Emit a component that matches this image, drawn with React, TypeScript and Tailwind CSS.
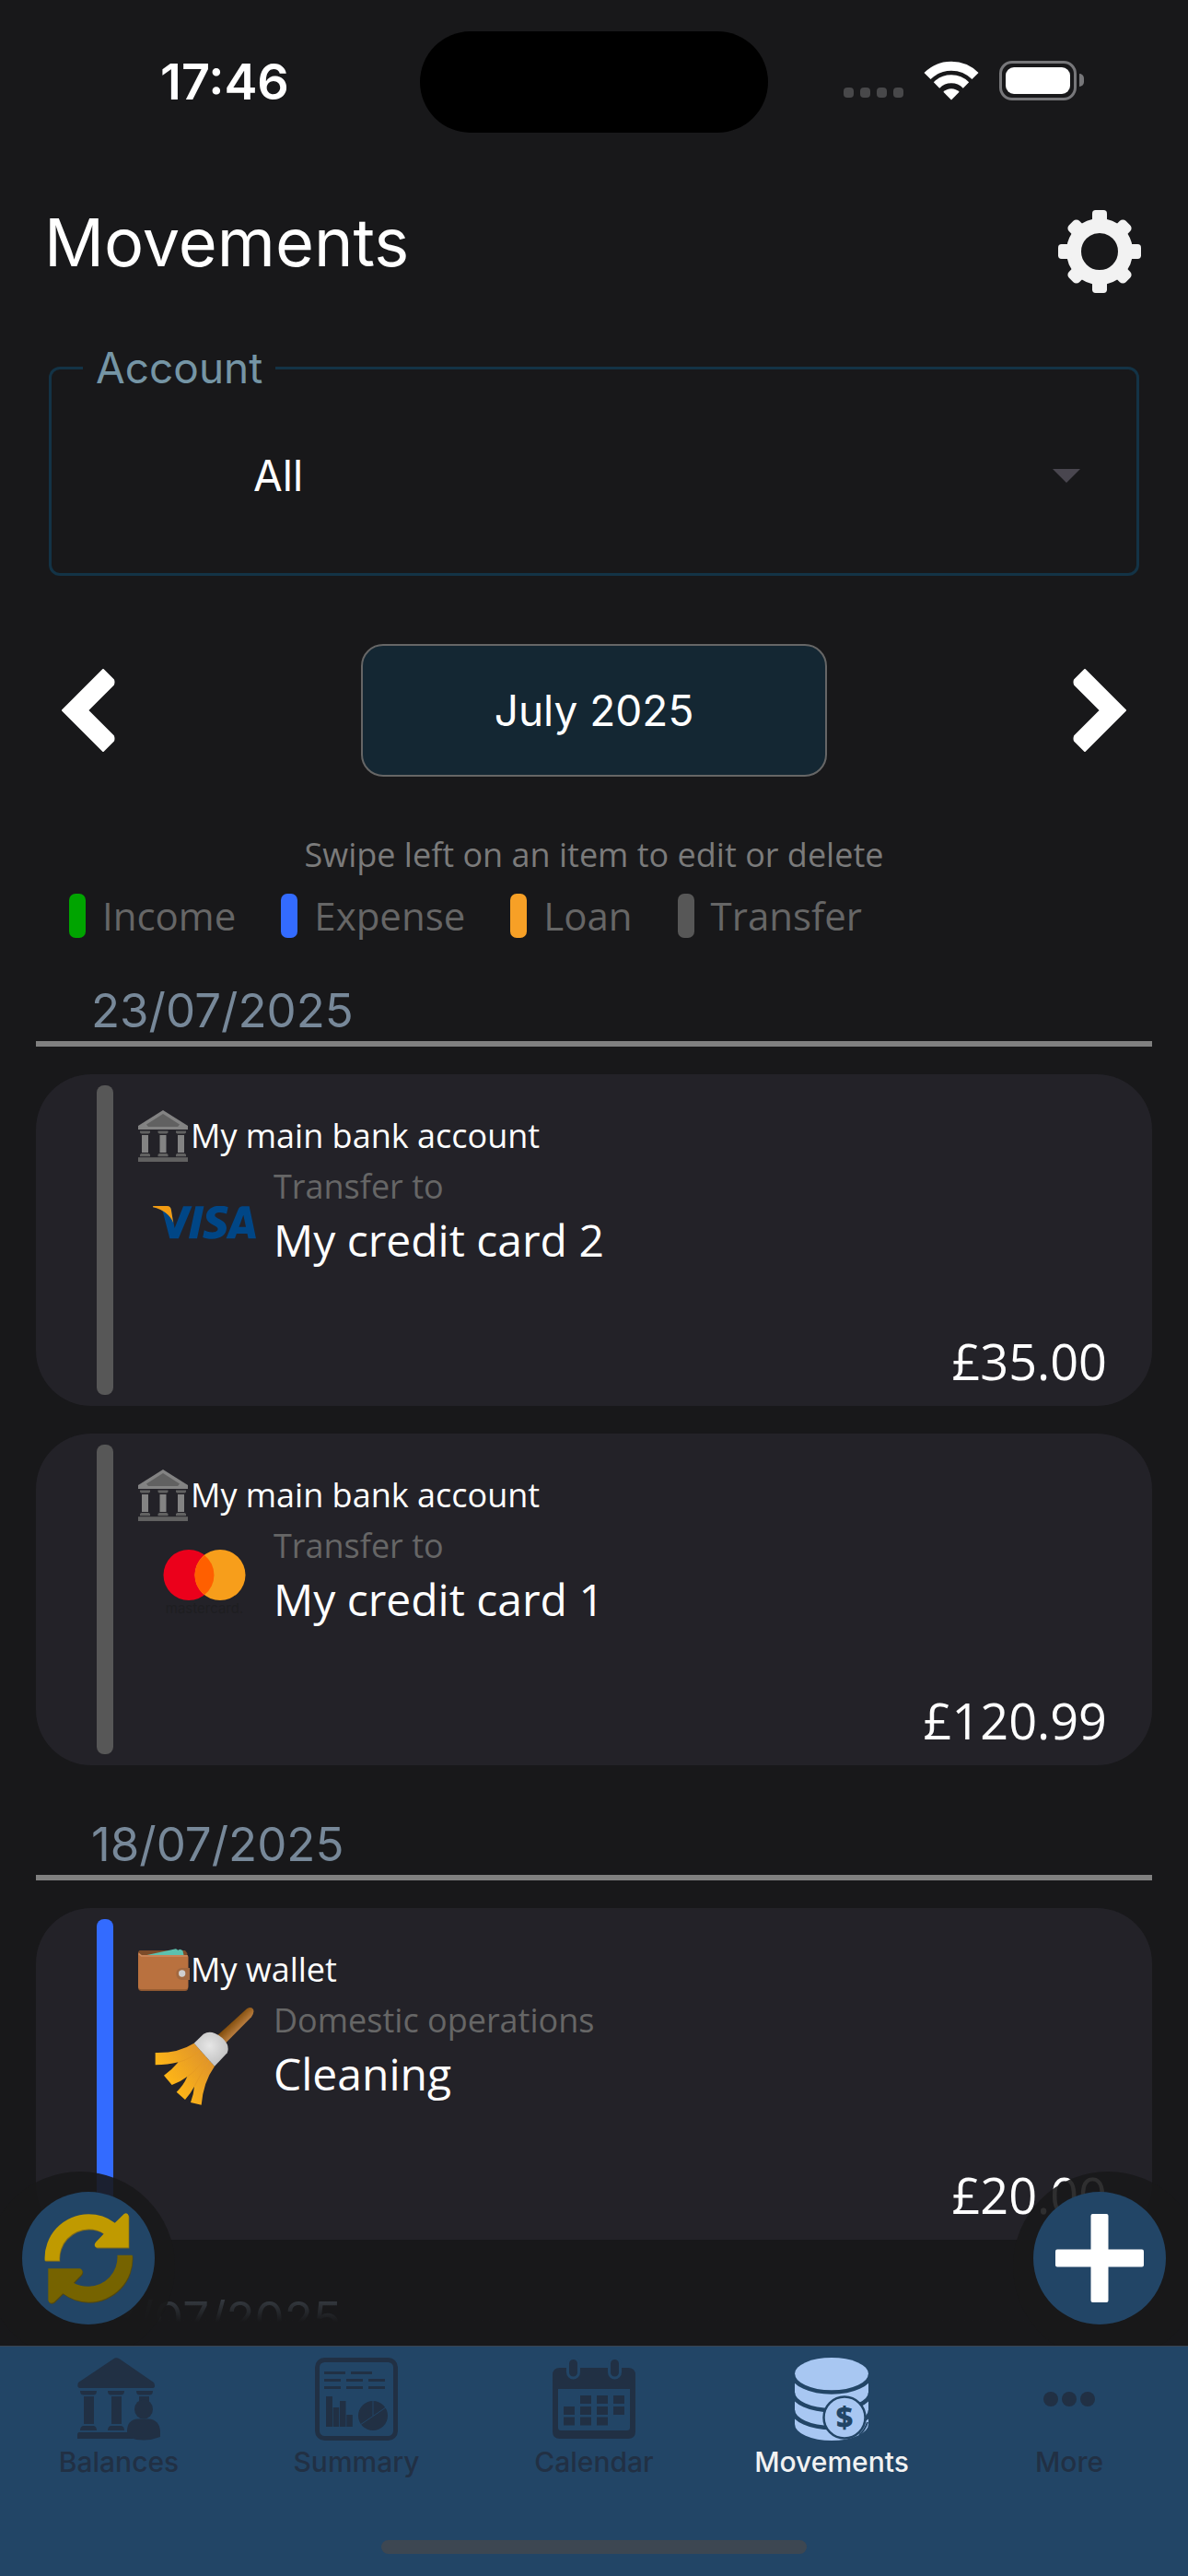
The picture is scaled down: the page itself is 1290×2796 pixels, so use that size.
import type { ReactNode } from "react"
import clsx from "clsx"
import { SiVisa } from "react-icons/si"

type MovementKind = "income" | "expense" | "loan" | "transfer"

interface Movement {
  id: string
  kind: MovementKind
  account: string
  accountIcon: ReactNode
  category: string
  title: string
  icon: ReactNode
  amount: number
}

interface MovementGroup {
  date: string
  movements: Movement[]
}

const kindColors: Record<MovementKind, string> = {
  income: "bg-[#00a400]",
  expense: "bg-[#336bff]",
  loan: "bg-[#f7a026]",
  transfer: "bg-[#575757]",
}

const legend: { kind: MovementKind; label: string }[] = [
  { kind: "income", label: "Income" },
  { kind: "expense", label: "Expense" },
  { kind: "loan", label: "Loan" },
  { kind: "transfer", label: "Transfer" },
]

/* ---------- status bar ---------- */

function WifiIcon() {
  return (
    <svg viewBox="0 0 60 43" className="h-[43px] w-[60px]" fill="none" stroke="white" aria-hidden="true">
      <path d="M4 16.5 A36.8 36.8 0 0 1 56 16.5" strokeWidth="10" />
      <path d="M14 26.5 A22.6 22.6 0 0 1 46 26.5" strokeWidth="9" />
      <path d="M30 42.5 L21.3 33.8 A12.4 12.4 0 0 1 38.7 33.8 Z" fill="white" stroke="none" />
    </svg>
  )
}

function StatusBar() {
  return (
    <div className="grid grid-cols-[1fr_378px_1fr] items-center px-8 pt-[34px]">
      <span className="text-center font-[Inter,sans-serif] text-[54px] leading-[60px] font-semibold">17:46</span>
      <div className="h-[110px] rounded-full bg-black" />
      <div className="mb-1 flex items-center justify-center gap-[22px]">
        <div className="mt-[27px] flex gap-[7px]">
          {[0, 1, 2, 3].map((dot) => (
            <span key={dot} className="size-[11px] rounded-[4px] bg-[#48484a]" />
          ))}
        </div>
        <WifiIcon />
        <div className="flex items-center gap-[3px]">
          <div className="h-[43px] w-[84px] rounded-[14px] border-3 border-[#77777a] p-[4px]">
            <div className="h-full rounded-[9px] bg-white" />
          </div>
          <div className="h-[14px] w-[5px] rounded-r-full bg-[#77777a]" />
        </div>
      </div>
    </div>
  )
}

/* ---------- icons ---------- */

function GearIcon() {
  return (
    <svg viewBox="45 45 270 270" className="size-[90px]" fill="#f2f2f2" aria-hidden="true">
      <circle cx="180" cy="180" r="84" fill="none" stroke="#f2f2f2" strokeWidth="48" />
      {[0, 90, 180, 270].map((angle) => (
        <rect key={angle} x="156" y="45" width="48" height="50" rx="11" transform={`rotate(${angle} 180 180)`} />
      ))}
      {[45, 135, 225, 315].map((angle) => (
        <rect key={angle} x="156" y="49" width="48" height="50" rx="14" transform={`rotate(${angle} 180 180)`} />
      ))}
    </svg>
  )
}

function ChevronIcon({ flipped = false }: { flipped?: boolean }) {
  return (
    <svg viewBox="0 0 59 90" className={clsx("h-[90px] w-[59px]", flipped && "rotate-180")} aria-hidden="true">
      <path
        d="M46 1 L57 12 Q58 14 57 17 L29 45 L57 73 Q58 76 57 78 L46 89 L2 45 Z"
        fill="white"
        stroke="white"
        strokeWidth="2"
        strokeLinejoin="round"
      />
    </svg>
  )
}

function BankIcon() {
  return (
    <svg viewBox="0 0 54 56" className="h-[56px] w-[54px]" aria-hidden="true">
      <path d="M27 0 L54 17 V21 H0 V17 Z" fill="#838383" />
      <path d="M27 4 L45 15.5 L43 18 H11 L9 15.5 Z" fill="#616161" />
      {[2, 21.5, 41].map((x) => (
        <g key={x}>
          <path d={`M${x} 22.5 h11 v2 l-1.5 1 h-8 l-1.5 -1 z`} fill="#616161" />
          <rect x={x + 2} y="27" width="7" height="19" fill="#838383" />
          <path d={`M${x + 1.5} 47 h8 l1.5 1 v2.3 h-11 v-2.3 z`} fill="#616161" />
        </g>
      ))}
      <rect y="51.2" width="54" height="4.8" fill="#616161" />
    </svg>
  )
}

function WalletIcon() {
  return (
    <svg viewBox="27 45 168 138" className="h-[46px] w-[56px]" aria-hidden="true">
      <path d="M27 56 L31 51 H180 L187 60 V90 H27 Z" fill="#7c4b29" />
      <path d="M45 68 L150 46 L157 50 L163 47 L172 51 L176 68 Z" fill="#5cc1ae" />
      <path d="M27 58 L36 66 H186 Q190 67 190 72 V172 Q190 183 180 183 H38 Q27 183 27 172 Z" fill="#8f5831" />
      <path d="M27 58 L36 66 H186 Q190 67 190 72 V168 Q190 178 180 178 H38 Q27 178 27 168 Z" fill="#b9713f" />
      <path d="M29 62 L38 69 H188" fill="none" stroke="#cb8b60" strokeWidth="5" />
      <path d="M195 108 V147 H168 Q151 145 151 127 Q151 110 168 108 Z" fill="#a2683f" />
      <circle cx="170" cy="126" r="11" fill="#cfcfcf" />
    </svg>
  )
}

function BroomIcon() {
  return (
    <svg viewBox="84 234 324 324" className="size-[108px]" aria-hidden="true">
      <defs>
        <linearGradient id="handle" x1="330" y1="290" x2="352" y2="312" gradientUnits="userSpaceOnUse">
          <stop offset="0" stopColor="#85500f" />
          <stop offset="1" stopColor="#b57a3c" />
        </linearGradient>
        <radialGradient id="ferrule" cx="262" cy="362" r="75" gradientUnits="userSpaceOnUse">
          <stop offset="0" stopColor="#e6e6e6" />
          <stop offset="1" stopColor="#bdbdbd" />
        </radialGradient>
        <linearGradient id="bristles" x1="245" y1="390" x2="130" y2="470" gradientUnits="userSpaceOnUse">
          <stop offset="0" stopColor="#e0952a" />
          <stop offset="1" stopColor="#fdb417" />
        </linearGradient>
      </defs>
      <path d="M288 328 L384 241 Q399 232 405 243 Q409 254 399 268 L316 352 Z" fill="url(#handle)" />
      <path
        d="M212 353 Q160 386 86 384 V424 Q126 424 161 415 Q140 440 114 458 L140 489 Q168 479 190 462 Q178 490 155 512 L183 537 Q200 518 213 494 Q211 520 201 546 L236 554 Q242 480 279 428 Z"
        fill="url(#bristles)"
      />
      <path d="M232 376 Q200 405 161 415 M250 395 Q225 440 190 462 M262 408 Q235 450 213 494" fill="none" stroke="#e79b22" strokeWidth="3" />
      <path d="M212 353 L243 323 Q260 313 280 321 Q305 331 320 356 Q326 371 320 385 L279 428 Z" fill="url(#ferrule)" />
    </svg>
  )
}

function VisaLogo() {
  return (
    <svg viewBox="0 8.2 24 7.6" className="w-[112px]" role="img" aria-label="Visa">
      <SiVisa size={24} color="#004686" />
      <path d="M0 8.48 L0.05 8.2 H3.35 Q4.1 8.25 4.24 9.03 L4.75 12.1 C4 10.3 2.4 9 0 8.48 Z" fill="#f39c12" />
    </svg>
  )
}

function MastercardLogo() {
  return (
    <svg viewBox="0 -8 90 86" className="w-[90px]" role="img" aria-label="Mastercard">
      <circle cx="28" cy="27.5" r="27.5" fill="#eb001b" />
      <circle cx="62" cy="27.5" r="27.5" fill="#f79e1b" />
      <path d="M45 5.9 A27.5 27.5 0 0 1 45 49.1 A27.5 27.5 0 0 1 45 5.9 Z" fill="#ff5f00" />
      <text x="45" y="69" textAnchor="middle" fill="#1e1e21" className="font-[Inter,sans-serif] text-[15px]">
        mastercard.
      </text>
    </svg>
  )
}

function RefreshIcon() {
  const upper =
    "M144 310 A143 143 0 0 1 287 158 Q335 158 373 186 L403 157 Q415 151 418 164 V267 H314 Q301 263 311 249 L337 222 Q316 207 287 207 A95 95 0 0 0 192 310 Z"
  const lower =
    "M381 292 H430 A143 143 0 0 1 287 445 Q240 445 203 417 L174 445 Q159 453 155 440 V335 H260 Q272 342 264 355 L238 382 Q258 394 287 394 A95 95 0 0 0 381 292 Z"
  return (
    <svg viewBox="143 154 290 298" className="h-[99px] w-[97px]" aria-hidden="true">
      <path d={upper} fill="#7f6a1c" transform="translate(2 3)" />
      <path d={upper} fill="#c09a00" />
      <path d={lower} fill="#54480f" transform="translate(2 3)" />
      <path d={lower} fill="#766300" />
    </svg>
  )
}

function PlusIcon() {
  return (
    <svg viewBox="0 0 96 96" className="size-[96px]" fill="white" aria-hidden="true">
      <rect x="38.5" width="19" height="96" rx="2" />
      <rect y="38.5" width="96" height="19" rx="2" />
    </svg>
  )
}

function BalancesIcon() {
  return (
    <svg viewBox="0 0 90 90" className="size-[90px]" fill="currentColor" aria-hidden="true">
      <path d="M39 1.5 Q42 -1 46 1.5 L83 27 Q86 33 81 33 H3 Q-1 33 1 27 Z" />
      {[3, 33, 64].map((x) => (
        <path key={x} d={`M${x} 36 h18 q0 4 -3 4.5 h-12 q-3 -0.5 -3 -4.5 z`} />
      ))}
      <rect x="7" y="42" width="11" height="30" />
      <rect x="37" y="42" width="11" height="30" />
      <rect x="67" y="42" width="11" height="12" />
      <path d="M6 74 h12 q3 1 3 5 h-18 q0 -4 3 -5 z" />
      <path d="M36 74 h12 q3 1 3 5 h-18 q0 -4 3 -5 z" />
      <path d="M2 81 H60 V88 H0 V84 Q0 81 2 81 Z" />
      <ellipse cx="72" cy="56" rx="10" ry="10.5" />
      <path d="M54 86 V80 Q54 67 66 66.5 H77 Q89 67 90 80 V86 Q72 93 54 86 Z" />
    </svg>
  )
}

function SummaryIcon() {
  return (
    <svg viewBox="0 0 90 90" className="size-[90px]" fill="currentColor" aria-hidden="true">
      <rect x="2.5" y="2.5" width="85" height="85" rx="8" fill="none" stroke="currentColor" strokeWidth="5" />
      <path d="M10 15h23v3H10zM39 15h23v3H39zM10 23h18v3H10zM34 23h18v3H34zM58 23h18v3H58zM10 31h18v3H10zM34 31h18v3H34zM58 31h18v3H58z" />
      <path d="M12 42h7v33h-7zM19.7 54h6.5v21h-6.5zM27 47h6.5v28H27zM34.3 62h6.5v13h-6.5z" />
      <circle cx="63" cy="63" r="16" />
      <path d="M63 46 V63 M49 73 L77 54" stroke="#224566" strokeWidth="1" />
    </svg>
  )
}

function CalendarIcon() {
  return (
    <svg viewBox="0 0 90 90" className="size-[90px]" fill="currentColor" aria-hidden="true">
      <path
        fillRule="evenodd"
        d="M8 11 H82 Q90 11 90 19 V80 Q90 88 82 88 H8 Q0 88 0 80 V19 Q0 11 8 11 Z M6 34 V76 Q6 79 9 79 H81 Q84 79 84 76 V34 Z"
      />
      <rect x="16.5" y="0.5" width="12" height="21.5" rx="6" stroke="#224566" strokeWidth="3" />
      <rect x="61.5" y="0.5" width="12" height="21.5" rx="6" stroke="#224566" strokeWidth="3" />
      <path d="M30 41h12v9H30zM48 41h12v9H48zM66 41h12v9H66zM12 53h12v9H12zM30 53h12v9H30zM48 53h12v9H48zM66 53h12v9H66zM12 64.5h12v9H12zM30 64.5h12v9H30zM48 64.5h12v9H48z" />
    </svg>
  )
}

function MovementsIcon() {
  return (
    <svg viewBox="0 0 80 90" className="h-[90px] w-[80px]" aria-hidden="true">
      <path d="M0 17.5 A40 17.5 0 0 1 80 17.5 V72 A40 18 0 0 1 0 72 Z" fill="#a8c7f2" />
      <g fill="none" stroke="#224566" strokeWidth="4.5">
        <path d="M-2 18 A42 19.5 0 0 0 82 18" />
        <path d="M-2 38 A42 19 0 0 0 82 38" />
        <path d="M-2 57 A42 19 0 0 0 82 57" />
      </g>
      <circle cx="54" cy="65" r="22.5" fill="#a8c7f2" stroke="#224566" strokeWidth="2.5" />
      <path d="M70 84 Q76 79 79 70" fill="none" stroke="#224566" strokeWidth="2" />
      <text x="54" y="76" textAnchor="middle" fill="#224566" className="font-['Open_Sans',sans-serif] text-[32px] font-extrabold">
        $
      </text>
    </svg>
  )
}

function MoreIcon() {
  return (
    <svg viewBox="0 0 56 90" className="h-[90px] w-[56px]" fill="currentColor" aria-hidden="true">
      <circle cx="8" cy="45" r="8" />
      <circle cx="28" cy="45" r="8" />
      <circle cx="48" cy="45" r="8" />
    </svg>
  )
}

/* ---------- data ---------- */

const groups: MovementGroup[] = [
  {
    date: "23/07/2025",
    movements: [
      {
        id: "m1",
        kind: "transfer",
        account: "My main bank account",
        accountIcon: <BankIcon />,
        category: "Transfer to",
        title: "My credit card 2",
        icon: <VisaLogo />,
        amount: 35,
      },
      {
        id: "m2",
        kind: "transfer",
        account: "My main bank account",
        accountIcon: <BankIcon />,
        category: "Transfer to",
        title: "My credit card 1",
        icon: <MastercardLogo />,
        amount: 120.99,
      },
    ],
  },
  {
    date: "18/07/2025",
    movements: [
      {
        id: "m3",
        kind: "expense",
        account: "My wallet",
        accountIcon: <WalletIcon />,
        category: "Domestic operations",
        title: "Cleaning",
        icon: <BroomIcon />,
        amount: 20,
      },
    ],
  },
  { date: "17/07/2025", movements: [] },
]

const tabs = [
  { label: "Balances", icon: <BalancesIcon /> },
  { label: "Summary", icon: <SummaryIcon /> },
  { label: "Calendar", icon: <CalendarIcon /> },
  { label: "Movements", icon: <MovementsIcon />, active: true },
  { label: "More", icon: <MoreIcon /> },
]

const formatAmount = (amount: number) =>
  new Intl.NumberFormat("en-GB", { style: "currency", currency: "GBP" }).format(amount)

/* ---------- sections ---------- */

function AccountSelect() {
  return (
    <fieldset className="mx-[53px] mt-[51px] rounded-[12px] border-3 border-[#133346] pb-[19px]">
      <legend className="ml-[34px] px-[14px] font-[Inter,sans-serif] text-[46px] leading-[60px] text-[#7595a5]">
        <label htmlFor="account">Account</label>
      </legend>
      <div className="grid items-center">
        <select
          id="account"
          className="col-start-1 row-start-1 h-[174px] w-full appearance-none bg-transparent pl-[219px] font-[Inter,sans-serif] text-[46px] text-white outline-none"
        >
          <option>All</option>
        </select>
        <svg
          viewBox="0 0 30 15"
          className="pointer-events-none col-start-1 row-start-1 mr-[61px] w-[30px] justify-self-end"
          aria-hidden="true"
        >
          <path d="M0 0 H30 L15 15 Z" fill="#49464f" />
        </svg>
      </div>
    </fieldset>
  )
}

function MonthPicker() {
  return (
    <div className="mt-[74px] flex items-center justify-between px-[66px]">
      <button type="button" aria-label="Previous month">
        <ChevronIcon />
      </button>
      <button
        type="button"
        className="h-[144px] w-[506px] rounded-[24px] border-2 border-[#666] bg-[#142733] font-[Inter,sans-serif] text-[46px] leading-[60px]"
      >
        July 2025
      </button>
      <button type="button" aria-label="Next month">
        <ChevronIcon flipped />
      </button>
    </div>
  )
}

function MovementCard({ movement }: { movement: Movement }) {
  return (
    <li className="flex h-[360px] gap-[27px] rounded-[60px] bg-[#232228] py-3 pr-[49px] pl-[66px]">
      <div className={clsx("w-[18px] shrink-0 rounded-[8px]", kindColors[movement.kind])} />
      <div className="flex grow flex-col pt-[27px]">
        <div className="flex items-center">
          <div className="flex h-[56px] w-[57px] items-center">{movement.accountIcon}</div>
          <p className="text-[36px] leading-[56px]">{movement.account}</p>
        </div>
        <div className="flex">
          <div className="mt-3 ml-4 flex h-[108px] w-[112px] items-center justify-center">{movement.icon}</div>
          <div className="ml-[19px]">
            <p className="text-[36px] leading-[54px] text-[#666]">{movement.category}</p>
            <p className="text-[48px] leading-[62px]">{movement.title}</p>
          </div>
        </div>
        <p className="mt-auto text-right text-[54px] leading-[74px]">{formatAmount(movement.amount)}</p>
      </div>
    </li>
  )
}

function TabBar() {
  return (
    <footer className="relative z-10 border-t border-[#3a444f] bg-[#224566] pt-3 pb-6">
      <nav className="grid grid-cols-5">
        {tabs.map((tab) => (
          <a
            key={tab.label}
            href="#"
            aria-current={tab.active ? "page" : undefined}
            className={clsx(
              "flex flex-col items-center gap-[5px] font-[Inter,sans-serif] text-[30px] leading-[36px] font-medium",
              tab.active ? "text-[#f2f2f2]" : "text-[#213044]",
            )}
          >
            {tab.icon}
            {tab.label}
          </a>
        ))}
      </nav>
      <div className="mx-auto mt-[67px] h-[15px] w-[462px] rounded-full bg-[#3d4752]" />
    </footer>
  )
}

export default function App() {
  return (
    <div className="flex h-screen flex-col bg-[#18181a] font-['Open_Sans',sans-serif] text-white">
      <StatusBar />

      <header className="mt-[84px] flex items-start justify-between pr-[51px] pl-12">
        <h1 className="font-[Inter,sans-serif] text-[72px] leading-[70px]">Movements</h1>
        <button type="button" aria-label="Settings">
          <GearIcon />
        </button>
      </header>

      <AccountSelect />
      <MonthPicker />

      <p className="mt-[58px] text-center text-[36px] leading-[54px] text-[#7b7b7b]">
        Swipe left on an item to edit or delete
      </p>
      <ul className="mt-[10px] flex gap-[49px] px-[75px]">
        {legend.map((item) => (
          <li key={item.kind} className="flex items-center gap-[18px] text-[42px] leading-[58px] text-[#666]">
            <span className={clsx("h-[48px] w-[18px] rounded-[7px]", kindColors[item.kind])} />
            {item.label}
          </li>
        ))}
      </ul>

      <main className="relative mt-[28px] min-h-0 grow overflow-hidden">
        <div className="flex h-full flex-col gap-10 overflow-y-auto px-[39px] [scrollbar-width:none]">
          {groups.map((group) => (
            <section key={group.date} className="shrink-0">
              <h2 className="border-b-6 border-[#808080] pt-3 pl-[60px] font-[Inter,sans-serif] text-[51px] leading-[67px] text-[#778899]">
                {group.date}
              </h2>
              <ul className="mt-[30px] flex flex-col gap-[30px]">
                {group.movements.map((movement) => (
                  <MovementCard key={movement.id} movement={movement} />
                ))}
              </ul>
            </section>
          ))}
        </div>

        {/* list fades out above the tab bar */}
        <div className="pointer-events-none absolute inset-x-0 bottom-0">
          <div className="h-[80px] bg-linear-to-b from-[#18181a]/0 to-[#18181a]" />
          <div className="h-[26px] bg-[#18181a]" />
        </div>

        <div className="absolute -bottom-[17px] -left-4 size-[206px] rounded-full bg-[#18181a]/90" />
        <div className="absolute -right-4 -bottom-[17px] size-[206px] rounded-full bg-[#18181a]/90" />
        <button
          type="button"
          aria-label="Refresh"
          className="absolute bottom-[23px] left-6 flex size-[144px] items-center justify-center rounded-full bg-[#224566]"
        >
          <RefreshIcon />
        </button>
        <button
          type="button"
          aria-label="Add movement"
          className="absolute right-6 bottom-[23px] flex size-[144px] items-center justify-center rounded-full bg-[#224566]"
        >
          <PlusIcon />
        </button>
      </main>

      <TabBar />
    </div>
  )
}
